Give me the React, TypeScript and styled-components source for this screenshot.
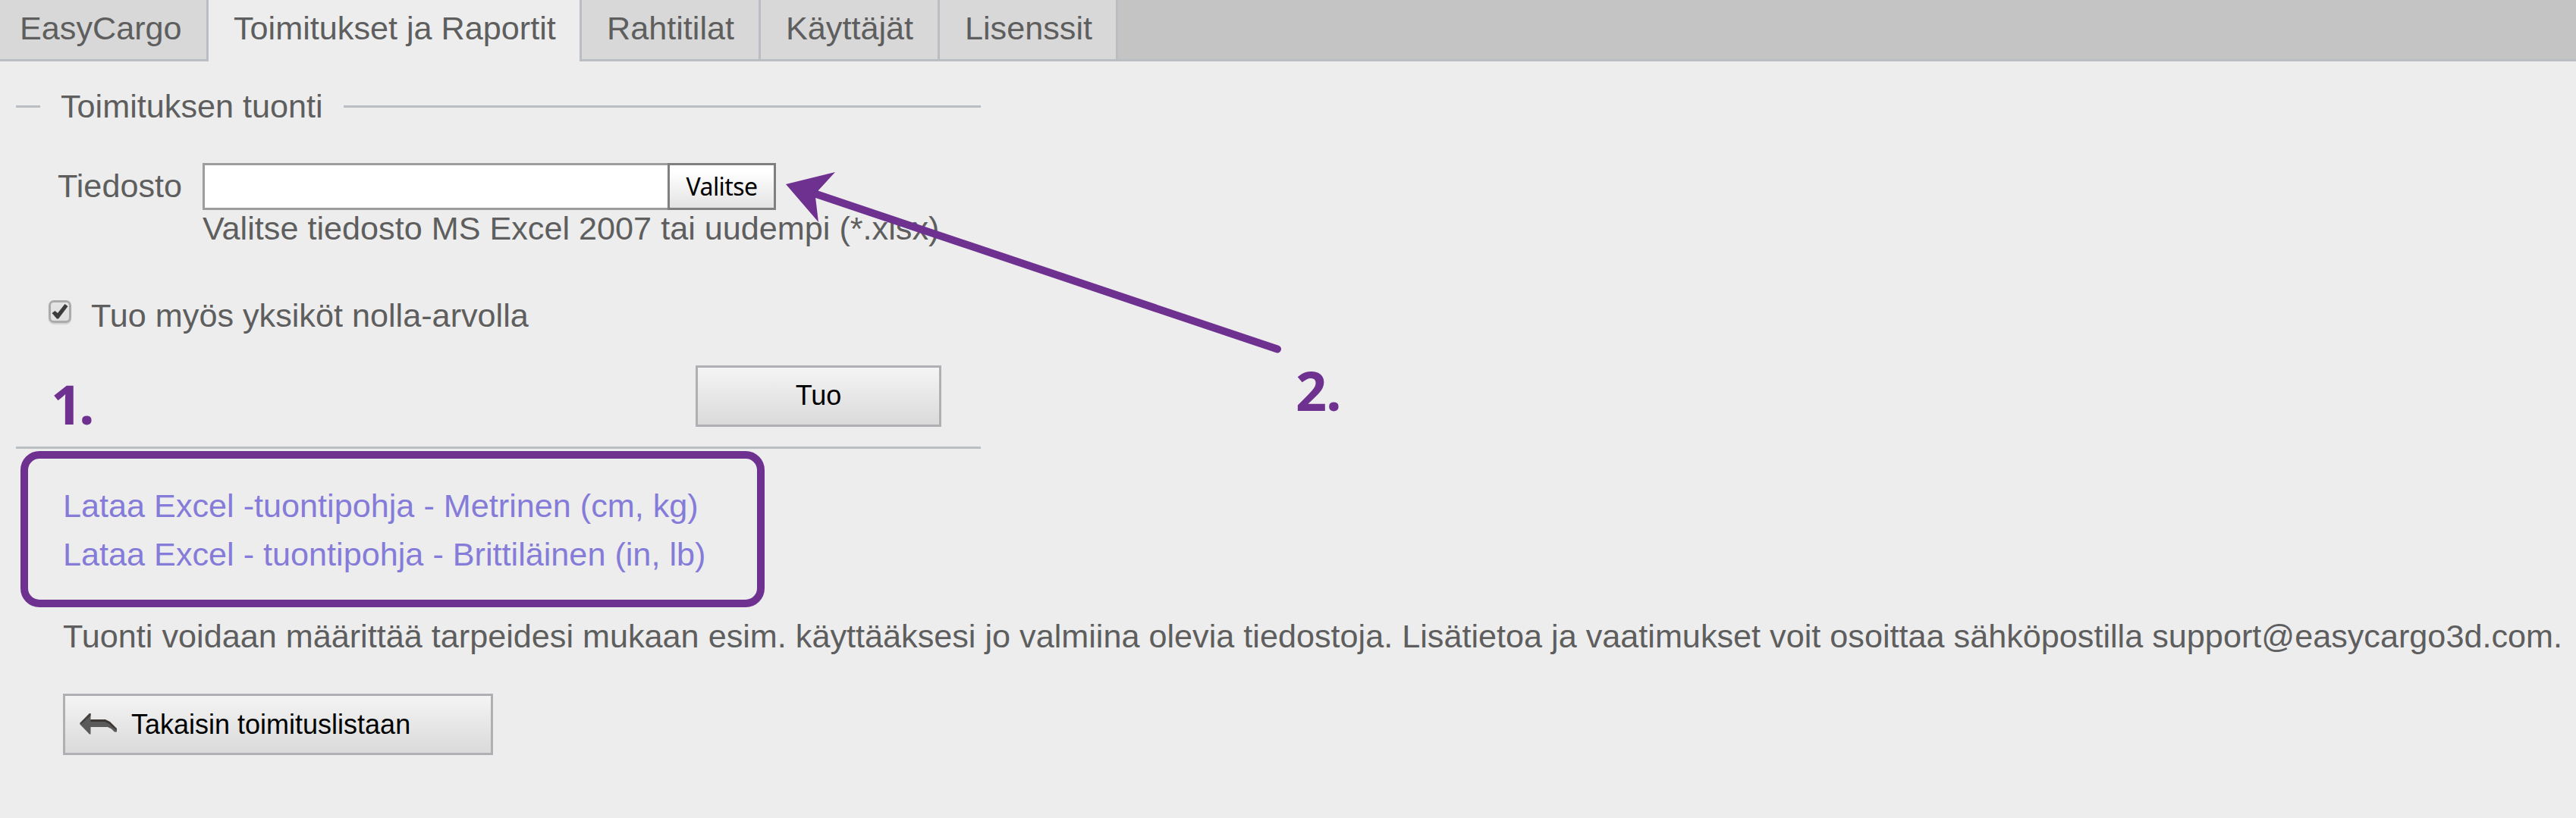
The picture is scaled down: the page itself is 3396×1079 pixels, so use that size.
import React, { useState } from "react";
import styled, { createGlobalStyle } from "styled-components";

const GlobalStyle = createGlobalStyle`
  body {
    margin: 0;
    background-color: #ededed;
    color: #5e5e5e;
    font-family: "Liberation Sans", Arial, sans-serif;
    font-size: 43.2px;
    line-height: 50px;
  }

  * {
    box-sizing: border-box;
  }
`;

const Page = styled.div`
  position: relative;
  min-height: 1079px;
  overflow: hidden;
`;

const TabBar = styled.nav`
  display: flex;
  height: 81px;
  background-color: #c4c4c4;
  box-shadow: inset 0 -3px #babdc2;
`;

const Tab = styled.a<{ $width: number; $active?: boolean; $first?: boolean }>`
  width: ${(props) => props.$width}px;
  padding: 12px 0 0 ${(props) => (props.$first ? 26 : 33)}px;
  border-right: 3px solid #babdc2;
  border-bottom: ${(props) => (props.$active ? "0" : "3px solid #babdc2")};
  background-color: ${(props) => (props.$active ? "#ededed" : "#d8d8d8")};
  white-space: nowrap;
`;

const Content = styled.main`
  padding: 34px 0 0 21px;
`;

const ImportForm = styled.form`
  display: flex;
  flex-direction: column;
  width: 1272px;
  height: 477px;
  border-bottom: 3px solid #babdc2;
`;

const Legend = styled.div`
  display: flex;
  align-items: center;
  height: 50px;
  gap: 27px;
`;

const Rule = styled.span<{ $width?: number }>`
  height: 3px;
  background-color: #babdc2;
  flex: ${(props) => (props.$width ? `0 0 ${props.$width}px` : "1")};
`;

const FileRow = styled.div`
  display: flex;
  margin-top: 50px;
  padding-left: 55px;
`;

const FileLabel = styled.label`
  width: 191px;
  padding-top: 5px;
`;

const FileInput = styled.input`
  width: 613px;
  height: 62px;
  border: 3px solid #9d9d9d;
  border-right: 0;
  background-color: #fff;
  outline: none;
`;

const PickButton = styled.button`
  width: 143px;
  height: 62px;
  padding: 0 0 2px;
  border: 3px solid #808080;
  background: linear-gradient(#fff 15%, #e3e3e3);
  color: #000;
  font-family: "Noto Sans", Tahoma, sans-serif;
  font-size: 32px;
  letter-spacing: -0.6px;
`;

const Hint = styled.div`
  margin-top: -1px;
  padding-left: 246px;
  white-space: nowrap;
`;

const CheckRow = styled.label`
  display: flex;
  margin-top: 65px;
  padding-left: 43px;
  gap: 26px;
`;

const CheckBox = styled.span`
  width: 30px;
  height: 30px;
  margin-top: 5px;
  border: 3px solid #aaabad;
  border-radius: 7px;
  background: linear-gradient(#e4e4e4, #e0e0e0);
  box-shadow: 0 2px 1px #d2d2d2;

  svg {
    display: block;
    overflow: visible;
  }
`;

const HiddenInput = styled.input`
  display: none;
`;

const FormButton = styled.button<{ $width: number }>`
  display: flex;
  align-items: center;
  justify-content: center;
  width: ${(props) => props.$width}px;
  height: 81px;
  padding: 0;
  border: 3px solid #afb0b4;
  background: linear-gradient(#f4f4f4, #dadada);
  color: #000;
  font-family: inherit;
  font-size: 36px;
`;

const SubmitButton = styled(FormButton)`
  margin: 41px 52px 0 auto;
  padding-bottom: 1px;
`;

const BackButton = styled(FormButton)`
  justify-content: flex-start;
  margin: 51px 0 0 62px;
  padding-left: 18px;
  gap: 18px;
`;

const Templates = styled.div`
  display: flex;
  flex-direction: column;
  width: 981px;
  height: 206px;
  margin: 3px 0 0 6px;
  padding: 37px 0 0 46px;
  gap: 14px;
  border: 10px solid #6f3190;
  border-radius: 25px;
`;

const TemplateLink = styled.a`
  color: #857bd8;
  white-space: nowrap;
`;

const Info = styled.p`
  margin: 13px 0 0 62px;
  white-space: nowrap;
`;

const Step = styled.span<{ $left: number; $top: number; $spacing: number }>`
  position: absolute;
  left: ${(props) => props.$left}px;
  top: ${(props) => props.$top}px;
  color: #6f3190;
  font-family: "Noto Sans", "Segoe UI", sans-serif;
  font-size: 72px;
  font-weight: 700;
  line-height: 98px;
  letter-spacing: ${(props) => props.$spacing}px;
`;

const Pointer = styled.svg`
  position: absolute;
  left: 1030px;
  top: 220px;
  pointer-events: none;
`;

function App() {
  const [checked, setChecked] = useState(true);

  return (
    <Page>
      <GlobalStyle />
      <TabBar>
        <Tab $width={275} $first>
          EasyCargo
        </Tab>
        <Tab $width={492} $active>
          Toimitukset ja Raportit
        </Tab>
        <Tab $width={236}>Rahtitilat</Tab>
        <Tab $width={236}>Käyttäjät</Tab>
        <Tab $width={235}>Lisenssit</Tab>
      </TabBar>

      <Content>
        <ImportForm onSubmit={(e) => e.preventDefault()}>
          <Legend>
            <Rule $width={32} />
            <span>Toimituksen tuonti</span>
            <Rule />
          </Legend>
          <FileRow>
            <FileLabel htmlFor="file">Tiedosto</FileLabel>
            <FileInput type="text" id="file" />
            <PickButton type="button">Valitse</PickButton>
          </FileRow>
          <Hint>Valitse tiedosto MS Excel 2007 tai uudempi (*.xlsx)</Hint>
          <CheckRow>
            <HiddenInput
              type="checkbox"
              checked={checked}
              onChange={(e) => setChecked(e.target.checked)}
            />
            <CheckBox>
              {checked && (
                <svg width="24" height="24" viewBox="0 0 24 24">
                  <path d="M1.5 14l4-3 3.500 3L18.500 2l4 3L10 21.500H8z" fill="#3c3c3c" />
                </svg>
              )}
            </CheckBox>
            <span>Tuo myös yksiköt nolla-arvolla</span>
          </CheckRow>
          <SubmitButton $width={324}>Tuo</SubmitButton>
        </ImportForm>

        <Templates>
          <TemplateLink>Lataa Excel -tuontipohja - Metrinen (cm, kg)</TemplateLink>
          <TemplateLink>Lataa Excel - tuontipohja - Brittiläinen (in, lb)</TemplateLink>
        </Templates>
        <Info>
          Tuonti voidaan määrittää tarpeidesi mukaan esim. käyttääksesi jo valmiina olevia
          tiedostoja. Lisätietoa ja vaatimukset voit osoittaa sähköpostilla
          support@easycargo3d.com.
        </Info>
        <BackButton type="button" $width={567}>
          <svg width="51" height="30" viewBox="0 0 51 30">
            <path
              d="M1 14L14 0h1.500v8.500H34l6 3 5 4 5 5v4h-3l-4-4-5-2.500H15.500V27.500H14z"
              fill="#5a5a5a"
            />
            <path d="M15.500 8H35l6 3 4 4 5 5v2l-7-5-3-3-6-3H15.500z" fill="#3d3834" />
            <path d="M1 13L14 0h1.500v3L3 14z" fill="#45403d" />
          </svg>
          Takaisin toimituslistaan
        </BackButton>
      </Content>

      <Step $left={67} $top={483} $spacing={-4}>
        1.
      </Step>
      <Step $left={1708} $top={465} $spacing={-1}>
        2.
      </Step>
      <Pointer width="670" height="260" viewBox="1030 220 670 260">
        <path d="M1036 243L1101 227L1079 251L1075 260L1079 293Z" fill="#6f3190" />
        <path d="M1076 256L1684 460.5" stroke="#6f3190" strokeWidth="10" strokeLinecap="round" />
      </Pointer>
    </Page>
  );
}

export default App;
